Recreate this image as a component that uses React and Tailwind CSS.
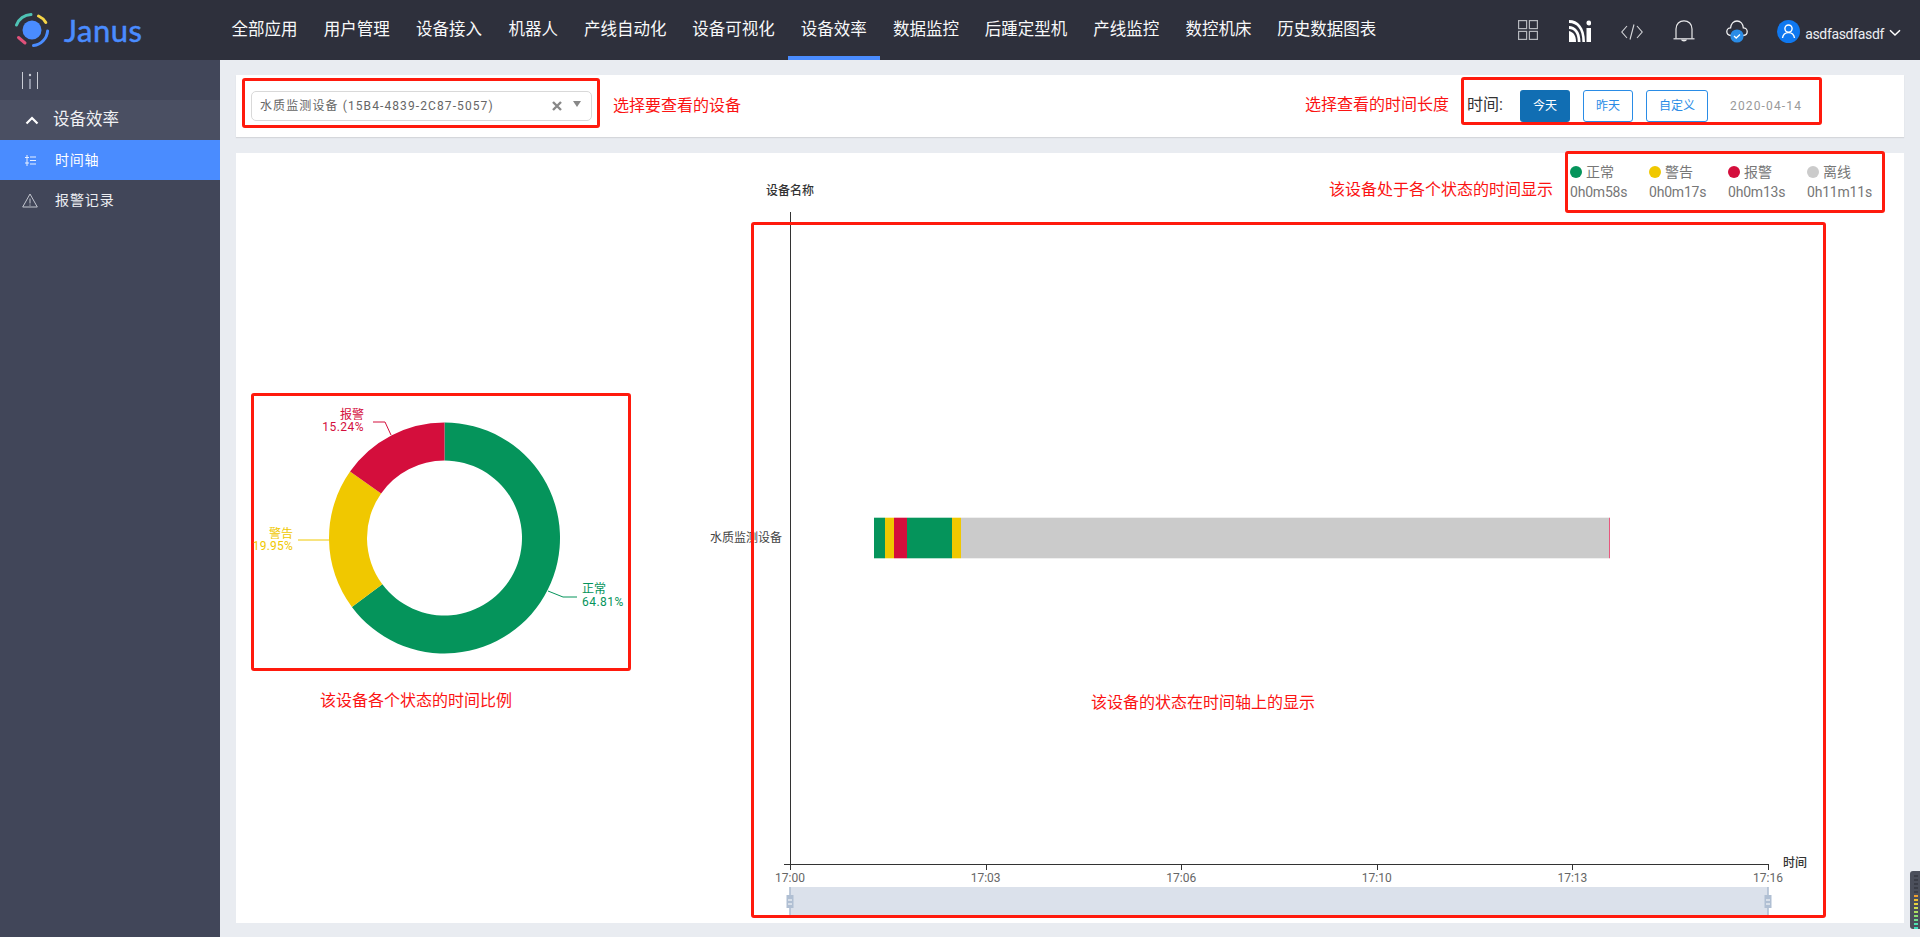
import React from "react";

const NAV = [
  ["全部应用", 92], ["用户管理", 92], ["设备接入", 92], ["机器人", 76], ["产线自动化", 108], ["设备可视化", 108],
  ["设备效率", 92, true], ["数据监控", 92], ["后踵定型机", 108], ["产线监控", 92], ["数控机床", 92], ["历史数据图表", 124],
];

function Logo() {
  return (
    <div className="flex items-center w-[218.5px] h-full">
      <svg width="64" height="60" viewBox="0 0 64 60" fill="none" strokeWidth="3" strokeLinecap="round">
        <circle cx="32" cy="30" r="9.5" fill="#4a8cff" />
        <path d="M16.5 25 A16 16 0 0 1 31 14.5" stroke="#4fc3b5" />
        <path d="M38.5 16 A16 16 0 0 1 45.8 22.5" stroke="#f5d547" />
        <path d="M47.6 31 A16 16 0 0 1 33.5 45.6" stroke="#4a8cff" />
        <path d="M18.5 37.5 L25 43" stroke="#e0517a" />
      </svg>
      <span className="text-[31px] leading-none text-[#4a8cff] font-['Lato'] tracking-[0.5px] [-webkit-text-stroke:0.5px_#4a8cff]">Janus</span>
    </div>
  );
}

function TopIcons() {
  return (
    <div className="flex items-center ml-auto h-full">
      <svg width="20" height="20" viewBox="0 0 20 20" fill="none" stroke="#b5b7bd" strokeWidth="1.2">
        <rect x="0.6" y="0.6" width="8" height="8" /><rect x="11.4" y="0.6" width="8" height="8" />
        <rect x="0.6" y="11.4" width="8" height="8" /><rect x="11.4" y="11.4" width="8" height="8" />
      </svg>
      <svg className="ml-[31px] mt-[2px]" width="22" height="22" viewBox="0 0 22 22" fill="#fff">
        <path d="M0 0 C9 0 16 7 16 22 H13.4 C13.4 9 8 3 0 3 Z" />
        <path d="M0 6 C6 6 11.5 11 11.5 22 H8.8 C8.8 13 5 9 0 9 Z" />
        <path d="M0 11 C4 12 7 15 7 22 H0 Z" />
        <rect x="17.5" y="8" width="4.5" height="14" />
        <circle cx="19.8" cy="3" r="2.4" />
      </svg>
      <svg className="ml-[30px] mt-[4px]" width="22" height="16" viewBox="0 0 22 16" fill="none" stroke="#d5d6da" strokeWidth="1.1">
        <path d="M6 2 L0.8 8 L6 14" /><path d="M16 2 L21.2 8 L16 14" /><path d="M13 0.5 L9 15.5" />
      </svg>
      <svg className="ml-[30px] mt-[2px]" width="22" height="23" viewBox="0 0 22 23" fill="none" stroke="#e8e8ea" strokeWidth="1.2">
        <path d="M3 18.5 V9 C3 4 6.5 0.8 11 0.8 C15.5 0.8 19 4 19 9 V18.5" />
        <path d="M0.5 18.8 H21.5" />
        <path d="M8 19.5 H14 C13.6 22 8.4 22 8 19.5 Z" fill="#e8e8ea" stroke="none" />
      </svg>
      <svg className="ml-[31px] mt-[4px]" width="22" height="24" viewBox="0 0 22 24" fill="none">
        <path d="M5 15.5 C2 15.5 0.8 13.5 0.8 11.6 C0.8 9.5 2.5 7.8 4.6 7.8 C5 4 7.5 1 11 1 C14.5 1 17 4 17.3 7.8 C19.5 7.8 21.2 9.5 21.2 11.6 C21.2 13.5 20 15.5 17 15.5" stroke="#f0f0f2" strokeWidth="1.3" />
        <circle cx="11" cy="16" r="6.6" fill="#2a8ce6" />
        <path d="M8 16 L10.2 18 L14 14.6" stroke="#fff" strokeWidth="1.3" />
      </svg>
      <svg className="ml-[29px] mt-[3px]" width="23" height="23" viewBox="0 0 23 23" fill="none">
        <circle cx="11.5" cy="11.5" r="11.5" fill="#0f78f0" />
        <circle cx="11.5" cy="8.6" r="3.6" stroke="#fff" strokeWidth="1.4" />
        <path d="M5.5 18 C6 14.5 8 12.6 11.5 12.6 C15 12.6 17 14.5 17.5 18" stroke="#fff" strokeWidth="1.4" />
      </svg>
      <span className="ml-[5px] mt-[8px] text-[14px] text-[#eceef2] tracking-[-0.33px]">asdfasdfasdf</span>
      <svg className="ml-[5px] mr-[19px] mt-[6px]" width="12" height="8" viewBox="0 0 12 8" fill="none" stroke="#fff" strokeWidth="1.5">
        <path d="M1 1.2 L6 6 L11 1.2" />
      </svg>
    </div>
  );
}

function Header() {
  return (
    <header className="h-[60px] shrink-0 flex bg-[#2e303c] text-white">
      <Logo />
      <nav className="flex h-full">
        {NAV.map(([t, w, active]) => (
          <div key={t} style={{ width: w + 0.2 }} className={"h-full flex items-center justify-center text-[16.5px] text-[#f8f9fa] border-b-4 " + (active ? "border-[#4a8cff]" : "border-transparent")}>
            <span className="mt-[4px] whitespace-nowrap">{t}</span>
          </div>
        ))}
      </nav>
      <TopIcons />
    </header>
  );
}

function Sidebar() {
  return (
    <aside className="w-[220px] shrink-0 bg-[#414659] text-white">
      <div className="h-[40px] flex items-center pl-[22px]">
        <svg width="16" height="17" viewBox="0 0 16 17" fill="none" stroke="#c9ccd5" strokeWidth="1">
          <path d="M0.5 0 V17" /><path d="M15.5 0 V17" /><path d="M8 7 V17" strokeWidth="2" stroke="#8d92a3" />
          <circle cx="8" cy="3" r="1.2" fill="#c9ccd5" stroke="none" />
        </svg>
      </div>
      <div className="h-[40px] flex items-center bg-[#4a4f62]">
        <svg className="ml-[25px]" width="14" height="9" viewBox="0 0 14 9" fill="none" stroke="#fff" strokeWidth="2.2">
          <path d="M1.5 7.5 L7 2 L12.5 7.5" />
        </svg>
        <span className="ml-[14px] text-[16.5px] text-[#f0f1f4]">设备效率</span>
      </div>
      <div className="h-[40px] flex items-center bg-[#4a8cff]">
        <svg className="ml-[25px]" width="11" height="11" viewBox="0 0 11 11" fill="none" stroke="#e8f0ff" strokeWidth="1">
          <path d="M2 0 V11" /><path d="M0 2.5 H4" /><path d="M0 8 H4" />
          <path d="M5 2 H11" /><path d="M5 5.5 H11" /><path d="M5 9 H11" />
        </svg>
        <span className="ml-[19px] text-[14px] tracking-[0.7px]">时间轴</span>
      </div>
      <div className="h-[40px] flex items-center">
        <svg className="ml-[22px]" width="16" height="15" viewBox="0 0 16 15" fill="none" stroke="#c3c6cf" strokeWidth="1">
          <path d="M8 1 L15.3 14 H0.7 Z" /><path d="M8 5.5 V10.5" /><path d="M8 11.5 V12.7" />
        </svg>
        <span className="ml-[17px] text-[14px] text-[#eceef2] tracking-[0.9px]">报警记录</span>
      </div>
    </aside>
  );
}

const RED = "border-[3px] border-[#ff1a0d] rounded-[3px]";

function TopCard() {
  return (
    <section className="h-[62px] bg-white shadow-[0_1px_1px_#d5d7db] flex items-center text-[#666]">
      <div className={"ml-[6px] mb-[6px] w-[358px] h-[50px] flex items-center pl-[6px] " + RED}>
        <div className="w-[341px] h-[30px] border border-[#d9d9d9] rounded-[5px] flex items-center pl-[8px] text-[12px] tracking-[1.1px] mt-[6px]">
          <span className="whitespace-nowrap">水质监测设备 (15B4-4839-2C87-5057)</span>
          <svg className="ml-auto" width="10" height="10" viewBox="0 0 10 10" fill="none" stroke="#888" strokeWidth="2.4"><path d="M1 1 L9 9 M9 1 L1 9" /></svg>
          <svg className="ml-[11px] mr-[10px] mt-[-4px]" width="8" height="6" viewBox="0 0 8 6" fill="#888"><path d="M0 0 H8 L4 6 Z" /></svg>
        </div>
      </div>
      <span className="ml-[13px] text-[16px] text-[#fb1313]">选择要查看的设备</span>
      <span className="ml-auto text-[16px] text-[#fb1313] mt-[-2px]">选择查看的时间长度</span>
      <div className={"ml-[12px] mr-[82px] mb-[10px] w-[361px] h-[48px] flex items-center pl-[3px] " + RED}>
        <span className="text-[16px] text-[#333] w-[53px] mt-[8px]">时间:</span>
        <button className="w-[50px] h-[32px] rounded-[3px] bg-[#116eb3] text-white text-[12px] mt-[10px]">今天</button>
        <button className="ml-[13px] w-[50px] h-[32px] rounded-[3px] border border-[#2a8ce6] text-[#2a8ce6] text-[12px] mt-[10px]">昨天</button>
        <button className="ml-[13px] w-[62px] h-[32px] rounded-[3px] border border-[#2a8ce6] text-[#2a8ce6] text-[12px] mt-[10px]">自定义</button>
        <span className="ml-[22px] text-[12px] text-[#999] tracking-[1.15px] mt-[10px]">2020-04-14</span>
      </div>
    </section>
  );
}

function Donut() {
  const cx = 444.5, cy = 538, R = 115.5, r = 77.5;
  const pt = (rad, a) => [cx + rad * Math.sin(a), cy - rad * Math.cos(a)];
  const seg = (from, to, color) => {
    const a0 = from * 2 * Math.PI, a1 = to * 2 * Math.PI;
    const [x0, y0] = pt(R, a0), [x1, y1] = pt(R, a1), [x2, y2] = pt(r, a1), [x3, y3] = pt(r, a0);
    const large = to - from > 0.5 ? 1 : 0;
    return <path d={`M${x0} ${y0} A${R} ${R} 0 ${large} 1 ${x1} ${y1} L${x2} ${y2} A${r} ${r} 0 ${large} 0 ${x3} ${y3} Z`} fill={color} />;
  };
  return (
    <svg width="374" height="272" viewBox="254 396 374 272" className="overflow-visible" fontSize="12">
      {seg(0, 0.6481, "#05945b")}
      {seg(0.6481, 0.8476, "#f0c800")}
      {seg(0.8476, 1, "#d40e3c")}
      <path d="M548 591 L563 597 H577" fill="none" stroke="#05945b" />
      <text x="582" y="593" fill="#05945b">正常</text>
      <text x="582" y="606" fill="#05945b" letterSpacing="0.45">64.81%</text>
      <path d="M329 540 H298" fill="none" stroke="#f0c800" />
      <text x="293" y="538" fill="#f0c800" textAnchor="end">警告</text>
      <text x="293" y="550" fill="#f0c800" textAnchor="end" letterSpacing="0.2">19.95%</text>
      <path d="M391 435 L385 422 H373" fill="none" stroke="#d40e3c" />
      <text x="364" y="419" fill="#d40e3c" textAnchor="end">报警</text>
      <text x="364" y="431" fill="#d40e3c" textAnchor="end" letterSpacing="0.45">15.24%</text>
    </svg>
  );
}

function Timeline() {
  const ticks = [[790, "17:00"], [985.6, "17:03"], [1181.2, "17:06"], [1376.8, "17:10"], [1572.4, "17:13"], [1768, "17:16"]];
  const segs = [[874, 885, "#05945b"], [885, 894, "#f0c800"], [894, 907, "#d40e3c"], [907, 952, "#05945b"], [952, 961, "#f0c800"], [961, 1609, "#cbcbcb"]];
  const handle = (x) => (
    <g>
      <rect x={x - 0.8} y="887" width="1.6" height="31" fill="#b0bfd3" />
      <rect x={x - 3.5} y="895" width="7" height="13" fill="#b0bfd3" />
      <path d={`M${x - 2} 900 H${x + 2} M${x - 2} 904 H${x + 2}`} stroke="#fff" strokeWidth="1" />
    </g>
  );
  return (
    <svg width="1264" height="770" viewBox="640 153 1264 770" fontSize="12" className="block">
      <text x="790" y="195" textAnchor="middle" fill="#333" fontWeight="500">设备名称</text>
      <path d="M790.5 212 V864 M784 864.5 H1768.5" fill="none" stroke="#333" />
      {ticks.map(([x, t]) => (
        <g key={t}>
          <path d={`M${Math.round(x) + 0.5} 864 V870`} stroke="#333" />
          <text x={x} y="881.5" textAnchor="middle" fill="#666">{t}</text>
        </g>
      ))}
      <text x="1795" y="867" textAnchor="middle" fill="#333" fontWeight="500">时间</text>
      <text x="782" y="542" textAnchor="end" fill="#444">水质监测设备</text>
      {segs.map(([a, b, c]) => <rect key={a} x={a} y="517.7" width={b - a} height="40.6" fill={c} />)}
      <rect x="1609" y="517.7" width="1" height="40.6" fill="#e8587e" />
      <rect x="790" y="887" width="978" height="31" fill="#dbe1eb" />
      {handle(790)}
      {handle(1768)}
      <text x="1203" y="708" textAnchor="middle" fontSize="16" fill="#fb1313">该设备的状态在时间轴上的显示</text>
    </svg>
  );
}

function Legend() {
  const items = [["正常", "0h0m58s", "bg-[#05945b]"], ["警告", "0h0m17s", "bg-[#f0c800]"], ["报警", "0h0m13s", "bg-[#d40e3c]"], ["离线", "0h11m11s", "bg-[#cbcbcb]"]];
  return (
    <div className="absolute right-[19px] top-[-2px] flex items-center">
      <span className="text-[16px] text-[#fb1313] mr-[12px] mt-[16px]">该设备处于各个状态的时间显示</span>
      <div className={"w-[320px] h-[62px] pl-[2px] pt-[8px] flex text-[14px] text-[#777] bg-white " + RED}>
        {items.map(([name, time, color]) => (
          <div key={name} className="w-[79px] shrink-0">
            <div className="flex items-center h-[20px] whitespace-nowrap">
              <span className={"w-[12px] h-[12px] rounded-full mr-[4px] " + color} />
              {name}
            </div>
            <div className="h-[20px] leading-[20px] whitespace-nowrap tracking-[-0.2px]">{time}</div>
          </div>
        ))}
      </div>
    </div>
  );
}

function ChartCard() {
  return (
    <section className="relative mt-[16px] h-[770px] bg-white flex">
      <div className="w-[404px] shrink-0 pl-[15px] pt-[240px]">
        <div className={"w-[380px] h-[278px] " + RED}>
          <Donut />
        </div>
        <p className="ml-[69px] mt-[18px] text-[16px] leading-[24px] text-[#fb1313] whitespace-nowrap">该设备各个状态的时间比例</p>
      </div>
      <Timeline />
      <div className={"absolute left-[515px] top-[69px] w-[1075px] h-[696px] pointer-events-none " + RED} />
      <Legend />
    </section>
  );
}

function Meter() {
  const colors = ["#3a3d47", "#3a3d47", "#3a3d47", "#3a3d47", "#3a3d47", "#f0a030", "#f0c030", "#e8d040", "#d0e050", "#b0e060", "#90e070", "#70e090", "#50e0b0", "#40e0c0"];
  return (
    <div className="absolute right-0 top-[871px] w-[10px] h-[58px] rounded-l-[3px] bg-[#4b4f5b] pl-[4px] pt-[4px] flex flex-col gap-[2px]">
      {colors.map((c, i) => <span key={i} style={{ background: c }} className="block w-[4px] h-[2px]" />)}
    </div>
  );
}

export default function App() {
  return (
    <div className="relative h-[937px] w-[1920px] overflow-hidden flex flex-col bg-[#e9ecf1] font-['Roboto','Noto_Sans_CJK_SC',sans-serif]">
      <Header />
      <div className="flex flex-1 min-h-0">
        <Sidebar />
        <main className="flex-1 px-[16px] pt-[15px]">
          <TopCard />
          <ChartCard />
        </main>
      </div>
      <Meter />
    </div>
  );
}
